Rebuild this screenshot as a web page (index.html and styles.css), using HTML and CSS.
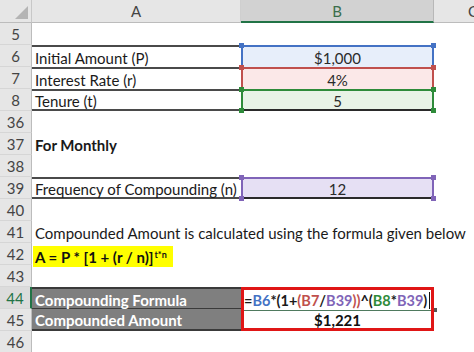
FILE: index.html
```html
<!DOCTYPE html>
<html>
<head>
<meta charset="utf-8">
<link rel="stylesheet" href="styles.css">
</head>
<body>
<div class="sheet">
  <div class="corner"><span class="tri"></span></div>
  <div class="colh">A</div>
  <div class="colh sel">B</div>
  <div class="colh c-col">C</div>

  <div class="rh">5</div><div class="c"></div><div class="c"></div><div class="c"></div>

  <div class="rh">6</div><div class="c a bt">Initial Amount (P)</div>
  <div class="c b blue">$1,000<span class="h tl"></span><span class="h tr"></span></div><div class="c"></div>

  <div class="rh">7</div><div class="c a bt">Interest Rate (r)</div>
  <div class="c b red">4%<span class="h tl"></span><span class="h tr"></span></div><div class="c"></div>

  <div class="rh">8</div><div class="c a bt bb">Tenure (t)</div>
  <div class="c b green last">5<span class="h tl"></span><span class="h tr"></span><span class="h bl"></span><span class="h br"></span></div><div class="c"></div>

  <div class="rh">36</div><div class="c"></div><div class="c"></div><div class="c"></div>

  <div class="rh">37</div><div class="c a bold">For Monthly</div><div class="c"></div><div class="c"></div>

  <div class="rh">38</div><div class="c"></div><div class="c"></div><div class="c"></div>

  <div class="rh">39</div><div class="c a bt bb">Frequency of Compounding (n)</div>
  <div class="c b purple last">12<span class="h tl"></span><span class="h tr"></span><span class="h bl"></span><span class="h br"></span></div><div class="c"></div>

  <div class="rh">40</div><div class="c"></div><div class="c"></div><div class="c"></div>

  <div class="rh">41</div><div class="c a over">Compounded Amount is calculated using the formula given below</div><div class="c"></div><div class="c"></div>

  <div class="rh">42</div><div class="c a"><span class="hl">A = P * [1 + (r / n)]<sup>t*n</sup></span></div><div class="c"></div><div class="c"></div>

  <div class="rh">43</div><div class="c"></div><div class="c"></div><div class="c"></div>

  <div class="rh act">44</div><div class="c a dark">Compounding Formula</div>
  <div class="c f1"><span class="fx"><span class="k">=</span><span class="rb">B6</span><span class="k">*(1+</span><span class="rr">(B7</span><span class="k">/</span><span class="rp">B39</span><span class="rr">))</span><span class="k">^(</span><span class="rg">B8</span><span class="k">*</span><span class="rp">B39</span><span class="k">)</span><span class="cur"></span></span><span class="dot"></span></div><div class="c"></div>

  <div class="rh">45</div><div class="c a dark db">Compounded Amount</div>
  <div class="c f2">$1,221</div><div class="c"></div>

  <div class="rh">46</div><div class="c"></div><div class="c"></div><div class="c"></div>
</div>
</body>
</html>
```

FILE: styles.css
```css
html, body {
  margin: 0;
  padding: 0;
  background: #ffffff;
  overflow: hidden;
}

.sheet {
  display: grid;
  grid-template-columns: 32px 209px 193px 40px;
  grid-template-rows: 23px repeat(15, 22px);
  width: 474px;
  height: 352px;
  font-family: Lato, "Open Sans", sans-serif;
  font-size: 15px;
  color: #1a1a1a;
}

.corner {
  position: relative;
  background: #e6e6e6;
  border-right: 1px solid #c8c8c8;
  border-bottom: 1px solid #bcbcbc;
  box-sizing: border-box;
}

.tri {
  position: absolute;
  right: 3px;
  bottom: 3px;
  width: 0;
  height: 0;
  border-left: 13px solid transparent;
  border-bottom: 13px solid #b4b4b4;
}

.colh {
  background: #e6e6e6;
  color: #444;
  display: flex;
  align-items: center;
  justify-content: center;
  border-right: 1px solid #cfcfcf;
  border-bottom: 1px solid #bcbcbc;
  box-sizing: border-box;
}

.colh.sel {
  background: #d2d2d2;
  color: #3b6e4c;
  border-bottom: 2px solid #217346;
  border-right: 1px solid #b8b8b8;
}

.colh.c-col {
  justify-content: flex-start;
  padding-left: 34px;
  border-right: none;
}

.rh {
  background: #e6e6e6;
  color: #444;
  display: flex;
  align-items: center;
  justify-content: center;
  border-right: 1px solid #bcbcbc;
  border-bottom: 1px solid #d6d6d6;
  box-sizing: border-box;
  padding-top: 1px;
}

.rh.act {
  background: #dcdcdc;
  color: #217346;
  border-right: 2px solid #217346;
}

.c {
  position: relative;
  box-sizing: border-box;
  display: flex;
  align-items: center;
  white-space: nowrap;
  padding-top: 2px;
}

.a {
  padding-left: 3px;
}

.over {
  overflow: visible;
}

.bt {
  border-top: 2px solid #4a4a4a;
}

.bb {
  border-bottom: 2px solid #4a4a4a;
}

.bold {
  font-weight: 700;
}

.b {
  justify-content: center;
  border-top: 2px solid;
  border-left: 2px solid;
  border-right: 2px solid;
  color: #2a2a2a;
}

.b.last {
  border-bottom: 2px solid;
}

.blue {
  background: #e7eefa;
  border-color: #4472c4;
  color: #2a2a2a;
}

.red {
  background: #fbe8e8;
  border-color: #c0504d;
}

.green {
  background: #e8f3e7;
  border-color: #2e8b3a;
}

.purple {
  background: #e6e0f4;
  border-color: #8064b8;
}

.h {
  position: absolute;
  width: 5px;
  height: 5px;
  background: currentColor;
}

.blue .h { background: #4472c4; }
.red .h { background: #c0504d; }
.green .h { background: #2e8b3a; }
.purple .h { background: #8064b8; }

.h.tl { top: -4px; left: -4px; }
.h.tr { top: -4px; right: -4px; }
.h.bl { bottom: -4px; left: -4px; }
.h.br { bottom: -4px; right: -4px; }

.hl {
  display: inline-flex;
  align-items: center;
  background: #ffff00;
  font-weight: 700;
  height: 21px;
  margin-left: -2px;
  padding: 2px 6px 0 2px;
  margin-top: 2px;
  box-sizing: border-box;
  color: #111;
}

.hl sup {
  font-size: 9px;
  position: relative;
  top: -3px;
  margin-left: 1px;
}

.dark {
  background: #7f7f7f;
  color: #ffffff;
  font-weight: 700;
  border-top: 2px solid #3a3a3a;
  border-bottom: 1px solid #3a3a3a;
}

.dark.db {
  border-top: none;
  border-bottom: 2px solid #3a3a3a;
}

.f1 {
  border: 3px solid #e01616;
  border-bottom: none;
  padding-left: 0;
  font-weight: 700;
  font-size: 14.5px;
}

.fx {
  display: inline-flex;
  align-items: center;
  height: 19px;
  border-bottom: 1px solid #4f7a5e;
  padding-right: 2px;
  margin-top: 1px;
}

.k { color: #1a1a1a; }
.rb { color: #4472c4; }
.rr { color: #c0504d; }
.rp { color: #8064b8; }
.rg { color: #2e8b3a; }

.cur {
  display: inline-block;
  width: 1px;
  height: 17px;
  background: #111;
  margin-left: 2px;
}

.dot {
  position: absolute;
  right: -6px;
  bottom: -3px;
  width: 3px;
  height: 4px;
  background: #555;
}

.f2 {
  border: 3px solid #e01616;
  border-top: none;
  justify-content: center;
  font-weight: 700;
  color: #111;
}
```
